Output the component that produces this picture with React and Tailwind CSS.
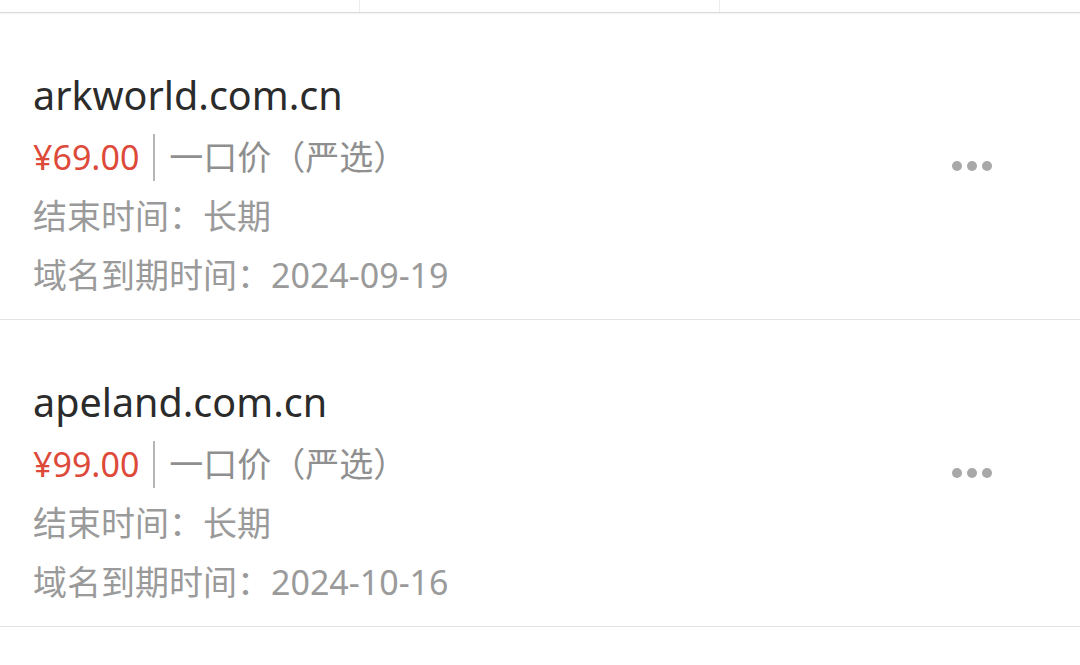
const ITEMS = [
  { domain: 'arkworld.com.cn', price: '¥69.00', end: '长期', expire: '2024-09-19' },
  { domain: 'apeland.com.cn', price: '¥99.00', end: '长期', expire: '2024-10-16' },
];

const FONT = { fontFamily: '"Noto Sans", "Noto Sans CJK SC", sans-serif' };

function DomainRow({ item }) {
  return (
    <div className="flex items-center h-[307px] border-b border-[#e3e3e3] pl-[33px] pr-[88px]">
      <div className="flex-1 pt-[52px] pb-[13px]">
        <div className="h-[59px] mb-[3px] leading-[59px] text-[39.5px] text-[#2b2b2b]">{item.domain}</div>
        <div className="h-[59px] flex items-center text-[34px]">
          <span className="text-[#dd4a3a]">{item.price}</span>
          <span className="w-[2px] h-[47px] bg-[#b5b5b5] mx-[14px]"></span>
          <span className="text-[#8f8f8f]">一口价（严选）</span>
        </div>
        <div className="h-[59px] leading-[59px] text-[34px] text-[#9a9a9a]">结束时间：长期</div>
        <div className="h-[59px] leading-[59px] text-[34px] text-[#9a9a9a]">域名到期时间：{item.expire}</div>
      </div>
      <div className="flex gap-[5px]">
        <span className="w-[10px] h-[10px] rounded-full bg-[#a8a8a8]"></span>
        <span className="w-[10px] h-[10px] rounded-full bg-[#a8a8a8]"></span>
        <span className="w-[10px] h-[10px] rounded-full bg-[#a8a8a8]"></span>
      </div>
    </div>
  );
}

export default function App() {
  return (
    <div className="w-[1080px] h-[665px] bg-white overflow-hidden" style={FONT}>
      {/* tab strip */}
      <div className="grid grid-cols-3 h-[13px] border-b border-[#d9d9d9] shadow-[0_1px_2px_rgba(0,0,0,0.05)]">
        <div className="border-r border-[#ececec]"></div>
        <div className="border-r border-[#ececec]"></div>
        <div></div>
      </div>
      {ITEMS.map(item => <DomainRow key={item.domain} item={item} />)}
    </div>
  );
}
